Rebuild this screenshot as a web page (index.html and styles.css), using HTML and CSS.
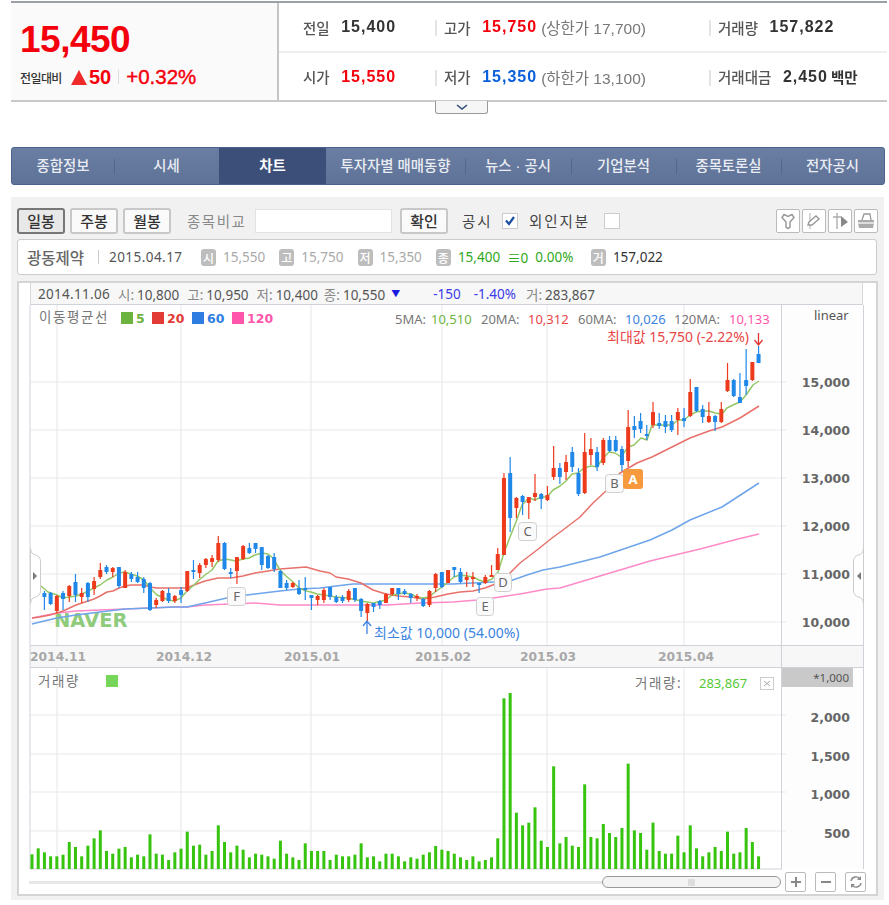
FILE: index.html
```html
<!DOCTYPE html>
<html lang="ko">
<head>
    <meta charset="UTF-8">
    <meta name="viewport" content="width=device-width, initial-scale=1.0">
    <title>광동제약 - 차트</title>
    <link rel="stylesheet" href="styles.css">
</head>
<body>
    <div class="page">
        <div class="quote">
            <div class="quote-now">
                <div class="now-price">15,450</div>
                <div class="now-change">
                    <span class="now-label">전일대비</span>
                    <span class="up-arrow"></span>
                    <span class="now-diff">50</span>
                    <span class="now-sep"></span>
                    <span class="now-rate">+0.32%</span>
                </div>
            </div>
            <div class="quote-table">
                <div class="cell first">
                    <span class="cell-label">전일</span><b class="cell-val">15,400</b>
                </div>
                <div class="cell second">
                    <span class="cell-label">고가</span><b class="cell-val red">15,750</b>
                    <span class="cell-limit">(상한가 17,700)</span>
                </div>
                <div class="cell third">
                    <span class="cell-label">거래량</span><b class="cell-val">157,822</b>
                </div>
                <div class="cell first">
                    <span class="cell-label">시가</span><b class="cell-val red">15,550</b>
                </div>
                <div class="cell second">
                    <span class="cell-label">저가</span><b class="cell-val blue">15,350</b>
                    <span class="cell-limit">(하한가 13,100)</span>
                </div>
                <div class="cell third">
                    <span class="cell-label">거래대금</span><b class="cell-val">2,450</b><span class="cell-unit">백만</span>
                </div>
            </div>
        </div>

        <div class="quote-toggle">
            <svg width="12" height="6" viewBox="0 0 12 6"><path d="M1 1l5 4 5-4" fill="none" stroke="#34507f" stroke-width="1.6"/></svg>
        </div>

        <div class="nav">
            <a class="tab tab-a">종합정보</a>
            <a class="tab tab-b">시세</a>
            <a class="tab tab-c active">차트</a>
            <a class="tab tab-d">투자자별 매매동향</a>
            <a class="tab tab-e">뉴스 · 공시</a>
            <a class="tab tab-f">기업분석</a>
            <a class="tab tab-g">종목토론실</a>
            <a class="tab tab-h">전자공시</a>
        </div>

        <div class="panel">
            <div class="toolbar">
                <button class="btn on">일봉</button>
                <button class="btn">주봉</button>
                <button class="btn">월봉</button>
                <span class="compare">종목비교</span>
                <span class="compare-input"></span>
                <button class="btn confirm">확인</button>
                <span class="tool-text notice">공시</span>
                <span class="check">
                    <svg width="12" height="11" viewBox="0 0 12 11"><path d="M2 5.5l3 3.5 5-7" fill="none" stroke="#1a4fa0" stroke-width="2.2"/></svg>
                </span>
                <span class="tool-text foreign">외인지분</span>
                <span class="check"></span>
                <div class="tool-icons">
                    <span class="icon-btn">
                        <svg width="18" height="18" viewBox="0 0 18 18"><path d="M5 2.500l4 2 4-2 2 3-4 4.500v5l-2 1.500-2-1.500v-5L3 5.500z" fill="#fff" stroke="#999" stroke-width="1.5"/></svg>
                    </span>
                    <span class="icon-btn">
                        <svg width="18" height="18" viewBox="0 0 18 18"><path d="M5 1v16" stroke="#bbb" stroke-width="1.2"/><path d="M3 13l1-3 7-6 3 3-7 6z" fill="#fff" stroke="#999" stroke-width="1.4"/></svg>
                    </span>
                    <span class="icon-btn">
                        <svg width="18" height="18" viewBox="0 0 18 18"><path d="M6 1v16M2 5h8" stroke="#aaa" stroke-width="1.3"/><path d="M10 4l7 6-7 5z" fill="#888"/></svg>
                    </span>
                    <span class="icon-btn">
                        <svg width="20" height="18" viewBox="0 0 20 18"><path d="M6 8l2-6h6l1 6" fill="#fff" stroke="#999" stroke-width="1.3"/><path d="M2 8h16v3l-1 5H3l-1-5z" fill="#aaa"/><path d="M2 11h16" stroke="#fff" stroke-width="1.2"/></svg>
                    </span>
                </div>
            </div>

            <div class="infobar">
                <strong class="info-name">광동제약</strong>
                <span class="info-sep"></span>
                <span class="info-date">2015.04.17</span>
                <span class="info-item"><i class="badge">시</i>15,550</span>
                <span class="info-item"><i class="badge">고</i>15,750</span>
                <span class="info-item"><i class="badge">저</i>15,350</span>
                <span class="info-item close"><i class="badge">종</i>15,400<em class="info-gap">≡0</em><em class="info-gap">0.00%</em></span>
                <span class="info-item vol"><i class="badge">거</i>157,022</span>
            </div>

            <div class="chart-box">
                <div class="chart-head">
                    <span class="head-date">2014.11.06</span>
                    <span><i>시:</i>10,800</span>
                    <span><i>고:</i>10,950</span>
                    <span><i>저:</i>10,400</span>
                    <span class="head-close"><i>종:</i>10,550</span>
                    <span class="head-down">▼</span>
                    <span class="head-change">-150</span>
                    <span class="head-rate">-1.40%</span>
                    <span class="head-vol"><i>거:</i>283,867</span>
                </div>

                <svg class="chart-svg" id="chart" width="859" height="565" viewBox="18 305 859 565">
                    <rect x="782" y="305" width="81" height="564" fill="#fdfdfd"/>
                    <rect x="30" y="645" width="833" height="22" fill="#f7f7f7"/>
                    <g id="grid" stroke="#e9e9e9" stroke-width="1.2"></g>
                    <path d="M30 305V869H782M30 645.5H863M30 667.5H863M781.5 305V869M863.5 305V869" fill="none" stroke="#cfd2d8"/>

                    <text class="naver" x="54" y="627">NAVER</text>
                    <g id="lines" fill="none" stroke-width="1.5" stroke-linejoin="round"></g>
                    <g id="candles"></g>
                    <g id="volumes" fill="#37c40f"></g>

                    <text class="t-gray" x="39" y="322">이동평균선</text>
                    <rect x="121" y="312" width="12" height="12" fill="#6db33f"/>
                    <text class="t-legend" x="136" y="323" fill="#6db33f">5</text>
                    <rect x="152" y="312" width="12" height="12" fill="#e23a34"/>
                    <text class="t-legend" x="167" y="323" fill="#e23a34">20</text>
                    <rect x="192" y="312" width="12" height="12" fill="#2f7de1"/>
                    <text class="t-legend" x="207" y="323" fill="#2f7de1">60</text>
                    <rect x="232" y="312" width="12" height="12" fill="#ff55aa"/>
                    <text class="t-legend" x="247" y="323" fill="#ff55aa">120</text>

                    <text class="t-ma" x="395" y="324" fill="#777">5MA:</text>
                    <text class="t-ma" x="431" y="324" fill="#6db33f">10,510</text>
                    <text class="t-ma" x="481" y="324" fill="#777">20MA:</text>
                    <text class="t-ma" x="528" y="324" fill="#e84545">10,312</text>
                    <text class="t-ma" x="578" y="324" fill="#777">60MA:</text>
                    <text class="t-ma" x="625" y="324" fill="#3d84e0">10,026</text>
                    <text class="t-ma" x="674" y="324" fill="#777">120MA:</text>
                    <text class="t-ma" x="729" y="324" fill="#ff55aa">10,133</text>
                    <text class="t-note" x="607" y="342" fill="#e84545">최대값 15,750 (-2.22%)</text>
                    <path d="M758.5 333v11M754.5 340l4 5 4-5" fill="none" stroke="#e03030" stroke-width="1.3"/>
                    <text class="t-ma" x="814" y="320" fill="#555">linear</text>

                    <path d="M367 634v-13M363 626l4-5 4 5" fill="none" stroke="#3d84e0" stroke-width="1.3"/>
                    <text class="t-note" x="374" y="638" fill="#3d84e0">최소값 10,000 (54.00%)</text>

                    <g class="mark">
                        <rect x="605.5" y="474.5" width="18" height="18" rx="3"/><text x="614.5" y="488">B</text>
                        <rect x="518.5" y="522.5" width="18" height="18" rx="3"/><text x="527.5" y="536">C</text>
                        <rect x="494.5" y="573.5" width="17" height="18" rx="3"/><text x="503" y="587">D</text>
                        <rect x="476.5" y="597.5" width="17" height="18" rx="3"/><text x="485" y="611">E</text>
                        <rect x="227.5" y="587.5" width="18" height="18" rx="3"/><text x="236.5" y="601">F</text>
                    </g>
                    <rect x="623" y="469" width="20" height="20" rx="3" fill="#f79a3e"/>
                    <text class="mark-a" x="633" y="484">A</text>

                    <g class="t-axis">
                        <text x="850" y="387">15,000</text>
                        <text x="850" y="435">14,000</text>
                        <text x="850" y="483">13,000</text>
                        <text x="850" y="531">12,000</text>
                        <text x="850" y="579">11,000</text>
                        <text x="850" y="627">10,000</text>
                        <text x="850" y="722">2,000</text>
                        <text x="850" y="761">1,500</text>
                        <text x="850" y="799">1,000</text>
                        <text x="850" y="838">500</text>
                    </g>
                    <g class="t-date">
                        <text x="30" y="661">2014.11</text>
                        <text x="156" y="661">2014.12</text>
                        <text x="284" y="661">2015.01</text>
                        <text x="415" y="661">2015.02</text>
                        <text x="520" y="661">2015.03</text>
                        <text x="658" y="661">2015.04</text>
                    </g>

                    <path d="M30.5 548q0 6 5 7 5 1 5 7v28q0 6-5 7-5 1-5 7z" fill="#fff" stroke="#ccc"/>
                    <path d="M33 572l4 4-4 4z" fill="#777"/>
                    <path d="M863.5 548q0 6-5 7-5 1-5 7v28q0 6 5 7 5 1 5 7z" fill="#fff" stroke="#ccc"/>
                    <path d="M861 572l-4 4 4 4z" fill="#777"/>

                    <text class="t-gray" x="38" y="686">거래량</text>
                    <rect x="106" y="675" width="12" height="12" fill="#76d65a"/>
                    <text class="t-gray" x="635" y="688">거래량:</text>
                    <text class="t-ma" x="699" y="688" fill="#55c934">283,867</text>
                    <rect x="760.5" y="677.5" width="13" height="12" fill="#fff" stroke="#ccc"/>
                    <path d="M764 681l6 5M770 681l-6 5" stroke="#aaa"/>
                    <rect x="782" y="668" width="71" height="19" fill="#c9c9c9"/>
                    <text class="t-unit" x="849" y="682">*1,000</text>
                </svg>

                <div class="chart-foot">
                    <div class="scroll-track">
                        <span class="scroll-thumb"><span class="scroll-grip"></span></span>
                    </div>
                    <span class="zoom-btn">
                        <svg width="12" height="12" viewBox="0 0 12 12"><path d="M6 1v10M1 6h10" stroke="#888" stroke-width="2"/></svg>
                    </span>
                    <span class="zoom-btn">
                        <svg width="12" height="12" viewBox="0 0 12 12"><path d="M1 6h10" stroke="#888" stroke-width="2"/></svg>
                    </span>
                    <span class="zoom-btn">
                        <svg width="14" height="14" viewBox="0 0 14 14"><path d="M2 6a5 5 0 0 1 9-2M12 8a5 5 0 0 1-9 2" fill="none" stroke="#888" stroke-width="1.4"/><path d="M12 1v4H8zM2 13V9h4z" fill="#888"/></svg>
                    </span>
                </div>
            </div>
        </div>
    </div>

    <script src="chart.js"></script>
</body>
</html>
```

FILE: styles.css
```css
* {
    margin: 0;
    padding: 0;
    box-sizing: border-box;
}

body {
    font-family: 'Liberation Sans', 'Noto Sans CJK KR', sans-serif;
    background: #fff;
    color: #333;
    overflow: hidden;
}

.page {
    width: 889px;
    height: 905px;
    padding: 1px 2px 0 11px;
    filter: blur(0.55px);
}

/* quote summary */
.quote {
    display: flex;
    height: 101px;
    border-top: 2px solid #9a9fa8;
    border-bottom: 2px solid #c9c9c9;
}

.quote-now {
    width: 268px;
    background: #fafafa;
    border-right: 2px solid #c4c4c4;
    padding: 18px 0 0 9px;
}

.now-price {
    font-size: 37px;
    font-weight: bold;
    line-height: 38px;
    letter-spacing: -0.5px;
    color: #f4000c;
}

.now-change {
    display: flex;
    align-items: center;
    height: 26px;
    margin-top: 5px;
}

.now-label {
    font-size: 12px;
    font-weight: 500;
    letter-spacing: -0.6px;
    color: #333;
    width: 51px;
}

.up-arrow {
    width: 0;
    height: 0;
    border-left: 8px solid transparent;
    border-right: 8px solid transparent;
    border-bottom: 15px solid #ee2a2a;
}

.now-diff {
    margin-left: 2px;
    font-size: 20px;
    font-weight: bold;
    color: #f4000c;
}

.now-sep {
    width: 1px;
    height: 14px;
    margin: 0 7px;
    background: #ddd;
}

.now-rate {
    font-size: 20.5px;
    color: #f4000c;
    -webkit-text-stroke: 0.4px #f4000c;
}

.quote-table {
    flex: 1;
    display: grid;
    grid-template-columns: 156px 274px 1fr;
    grid-template-rows: 50px 1fr;
}

.cell {
    display: flex;
    align-items: center;
    position: relative;
}

.cell:nth-child(-n+3) {
    border-bottom: 2px solid #efefef;
}

.first {
    padding-left: 24px;
}

.second {
    padding-left: 9px;
}

.third {
    padding-left: 9px;
}

.second::before,
.third::before {
    content: '';
    position: absolute;
    left: 0;
    top: 17px;
    width: 2px;
    height: 16px;
    background: #e4e4e4;
}

.cell-label {
    font-size: 14.5px;
    font-weight: 500;
    color: #555;
    margin-right: 11.5px;
}

.cell-val {
    font-size: 16px;
    letter-spacing: 1px;
    color: #333;
}

.red {
    color: #f4000c;
}

.blue {
    color: #0a5fdc;
}

.cell-limit {
    margin-left: 4px;
    font-size: 15.5px;
    color: #777;
}

.cell-unit {
    margin-left: 3px;
    font-size: 14.5px;
    font-weight: 700;
    color: #333;
}

.quote-toggle {
    width: 53px;
    height: 13px;
    margin-left: 424px;
    margin-top: -1px;
    display: flex;
    justify-content: center;
    align-items: center;
    border: 1px solid #999;
    border-top: none;
    border-radius: 0 0 3px 3px;
    background: #f6f6f6;
}

/* tabs */
.nav {
    display: flex;
    width: 874px;
    height: 38px;
    margin-top: 33px;
    background: #63769c;
    border: 1px solid #4d628c;
    border-radius: 3px;
}

.tab {
    display: flex;
    align-items: center;
    justify-content: center;
    position: relative;
    padding-bottom: 4px;
    font-size: 14.4px;
    font-weight: 500;
    color: #e9edf3;
    background: linear-gradient(#6a7da2, #5f7298);
}

.tab.active {
    background: #3b4f78;
    color: #fff;
    font-weight: 700;
}

.tab-a { width: 102px; border-radius: 3px 0 0 3px; }
.tab-b { width: 105px; }
.tab-c { width: 107px; }
.tab-d { width: 139px; }
.tab-e { width: 106px; }
.tab-f { width: 105px; }
.tab-g { width: 105px; }
.tab-h { flex: 1; border-radius: 0 3px 3px 0; }

.tab-b::before,
.tab-e::before,
.tab-f::before,
.tab-g::before,
.tab-h::before {
    content: '';
    position: absolute;
    left: 0;
    top: 11px;
    width: 1px;
    height: 15px;
    background: #54668c;
}

/* chart panel */
.panel {
    width: 873px;
    height: 703px;
    margin-top: 12px;
    padding: 10px 6px 0 6px;
    background: #f1f1f1;
}

.toolbar {
    display: flex;
    align-items: center;
    height: 27px;
}

.btn {
    width: 48px;
    height: 26px;
    margin-right: 5px;
    font: 500 15px 'Noto Sans CJK KR', sans-serif;
    color: #333;
    background: #fafafa;
    border: 2px solid #c8c8c8;
    border-radius: 3px;
}

.btn.on {
    background: #e8e8e8;
    border-color: #777;
}

.compare {
    margin-left: 11px;
    width: 68px;
    font-size: 14.5px;
    letter-spacing: 1.5px;
    color: #888;
}

.compare-input {
    width: 137px;
    height: 24px;
    background: #fff;
    border: 1px solid #e2e2e2;
}

.confirm {
    margin: 0 0 0 8px;
}

.tool-text {
    font-size: 14.5px;
    letter-spacing: 1.9px;
    color: #444;
}

.notice {
    margin-left: 14px;
    width: 40px;
}

.check {
    display: flex;
    align-items: center;
    justify-content: center;
    width: 16px;
    height: 16px;
    background: #fff;
    border: 1px solid #ccc;
}

.foreign {
    margin-left: 11px;
    width: 75px;
}

.tool-icons {
    display: flex;
    gap: 2px;
    margin-left: auto;
}

.icon-btn {
    display: flex;
    align-items: center;
    justify-content: center;
    width: 24px;
    height: 24px;
    background: #fff;
    border: 1px solid #bbb;
    border-radius: 2px;
}

.infobar {
    display: flex;
    align-items: center;
    width: 860px;
    height: 36px;
    margin-top: 5px;
    padding-left: 9px;
    background: #fff;
    border: 1px solid #ccc;
    border-radius: 3px;
    font-family: 'Noto Sans', 'Noto Sans CJK KR', sans-serif;
    font-size: 13.5px;
}

.info-name {
    width: 60px;
    font-family: 'Noto Sans CJK KR', sans-serif;
    font-size: 15.5px;
    font-weight: 500;
    white-space: nowrap;
    color: #666;
}

.info-sep {
    width: 1px;
    height: 14px;
    margin: 0 10px 0 11px;
    background: #ccc;
}

.info-date {
    width: 92px;
    color: #555;
    letter-spacing: 0.45px;
}

.info-item {
    display: flex;
    align-items: center;
    flex: none;
    width: 78.3px;
    color: #aaa;
}

.badge {
    display: flex;
    align-items: center;
    justify-content: center;
    width: 15px;
    height: 17px;
    margin-right: 7px;
    border-radius: 3px;
    background: #bdbdbd;
    font: 500 12px 'Noto Sans CJK KR', sans-serif;
    color: #fff;
}

.info-item.close {
    width: 155px;
    color: #2fa820;
}

.info-gap {
    font-style: normal;
    margin-left: 7px;
}

.info-item.vol {
    width: 80px;
    color: #333;
}

.chart-box {
    width: 861px;
    height: 615px;
    margin-top: 6px;
    background: #fff;
    border: 2px solid #d4d4d4;
}

.chart-head {
    display: flex;
    align-items: center;
    gap: 8px;
    height: 22px;
    margin-left: 11px;
    margin-right: 13px;
    padding-left: 7px;
    background: #f7f7f7;
    border-left: 1px solid #d9d9d9;
    border-right: 1px solid #d9d9d9;
    border-bottom: 1px solid #cfd2d8;
    font-family: 'Noto Sans', 'Noto Sans CJK KR', sans-serif;
    font-size: 13.5px;
    color: #555;
}

.chart-head i {
    font-style: normal;
    color: #888;
    margin-right: 3px;
}

.head-date {
    letter-spacing: 0.3px;
}

.head-close {
    margin-left: -2px;
}

.head-down {
    margin-left: -2px;
    font-size: 9px;
    color: #1a1ae0;
}

.head-change {
    margin-left: 25px;
    color: #3a3ae8;
}

.head-rate {
    margin-left: 5px;
    color: #3a3ae8;
}

.head-vol {
    margin-left: 2px;
}

.chart-svg {
    display: block;
    margin-left: -1px;
}

.chart-svg text {
    font-family: 'Noto Sans', 'Noto Sans CJK KR', sans-serif;
}

.chart-svg .t-gray {
    font-size: 13.5px;
    letter-spacing: 1.6px;
    fill: #777;
}

.chart-svg .t-legend {
    font-family: 'DejaVu Sans', sans-serif;
    font-size: 12.5px;
    font-weight: bold;
}

.chart-svg .t-ma {
    font-size: 13px;
}

.chart-svg .t-note {
    font-size: 14px;
}

.chart-svg .naver {
    font-family: 'DejaVu Sans', sans-serif;
    font-size: 19.5px;
    font-weight: bold;
    fill: #8fcb7c;
}

.chart-svg .t-axis text {
    font-family: 'DejaVu Sans', sans-serif;
    font-size: 12.5px;
    font-weight: bold;
    text-anchor: end;
    fill: #666;
}

.chart-svg .t-date text {
    font-family: 'DejaVu Sans', sans-serif;
    font-size: 12.3px;
    font-weight: bold;
    fill: #a8a8a8;
}

.mark rect {
    fill: #fafafa;
    stroke: #cfcfcf;
}

.chart-svg .mark text,
.chart-svg .mark-a {
    font-size: 13px;
    text-anchor: middle;
    fill: #666;
}

.chart-svg .mark-a {
    font-weight: bold;
    fill: #fff;
}

.chart-svg .t-unit {
    font-size: 11.5px;
    text-anchor: end;
    fill: #555;
}

.chart-foot {
    display: flex;
    align-items: center;
    height: 24px;
    padding-left: 10px;
}

.scroll-track {
    display: flex;
    flex: none;
    align-items: center;
    justify-content: flex-end;
    width: 752px;
    height: 3px;
    margin-right: 4px;
    background: #e7e7e7;
}

.scroll-thumb {
    display: flex;
    flex: none;
    align-items: center;
    justify-content: center;
    width: 179px;
    height: 12px;
    background: #f4f4f4;
    border: 1px solid #999;
    border-radius: 6px;
}

.scroll-grip {
    width: 7px;
    height: 7px;
    background: #ddd;
}

.zoom-btn {
    display: flex;
    flex: none;
    align-items: center;
    justify-content: center;
    width: 21px;
    height: 20px;
    margin-right: 9px;
    background: #fff;
    border: 1px solid #bbb;
    border-radius: 2px;
}
```

FILE: chart.js
```js
// x of the n-th trading day, same for candles and volume bars
function dayX(i) {
    return 32 + 6.21 * i;
}

// candles from 2014.11 on: [high, low, bodyTop, bodyBottom, colour], plotted in screen y
const candles = [
    null, null,
    [591,610,593,597,'b'],[592,605,593,604,'b'],[595,613,596,611,'r'],[591,610,593,599,'b'],[585,602,586,596,'r'],
    [574,602,582,595,'b'],[588,603,593,597,'r'],[582,602,583,597,'b'],[577,595,581,589,'r'],[563,579,570,577,'r'],
    [565,574,567,572,'b'],[567,577,568,572,'r'],[567,588,567,586,'b'],[570,588,572,588,'r'],[572,582,574,579,'b'],
    [572,583,577,582,'b'],[577,593,579,588,'b'],[582,611,583,610,'b'],[598,608,600,605,'r'],[590,602,591,601,'r'],
    [588,603,593,601,'b'],[595,603,596,601,'r'],[587,603,590,595,'b'],[571,592,571,591,'r'],[560,579,570,572,'b'],
    [563,578,565,573,'r'],[558,568,559,565,'r'],[555,567,558,562,'r'],[536,562,543,560,'r'],[542,570,543,569,'b'],
    [568,578,572,573,'b'],[557,584,557,571,'r'],[545,560,546,559,'r'],[543,554,548,553,'b'],[543,553,543,549,'b'],
    [547,570,547,565,'b'],[555,569,556,568,'b'],[553,572,557,569,'b'],[570,588,571,588,'b'],[580,590,583,588,'b'],
    [582,588,583,587,'r'],[580,595,588,594,'b'],[577,600,588,590,'b'],[595,610,595,598,'b'],[595,605,596,600,'r'],
    [588,603,590,600,'r'],[587,600,587,597,'b'],[595,603,597,602,'b'],[595,603,597,601,'b'],[589,602,591,600,'r'],
    [588,602,588,600,'b'],[598,617,599,611,'b'],[603,622,604,613,'r'],[603,612,603,607,'b'],[600,609,601,605,'b'],
    [593,603,594,603,'r'],[588,596,588,594,'r'],[588,600,588,594,'b'],[589,595,591,594,'b'],[593,603,594,598,'b'],
    [594,601,596,598,'r'],[598,607,599,606,'b'],[590,607,591,605,'r'],[573,592,574,588,'r'],[572,588,572,587,'b'],
    [570,583,570,583,'r'],[567,577,567,570,'b'],[568,583,572,582,'b'],[572,587,577,580,'r'],[572,587,577,579,'r'],
    [583,593,583,585,'b'],[575,584,577,583,'r'],[565,577,575,576,'r'],[548,570,554,570,'r'],[473,555,478,555,'r'],
    [457,532,473,518,'b'],[497,518,498,508,'r'],[495,515,496,502,'b'],[497,519,497,503,'r'],[474,501,493,497,'r'],
    [493,509,494,499,'b'],[486,501,495,500,'r'],[446,480,468,477,'r'],[463,484,468,477,'b'],[455,480,462,472,'r'],
    [447,472,452,467,'b'],[468,496,473,494,'b'],[433,494,452,493,'r'],[438,465,449,455,'r'],[447,471,452,467,'b'],
    [438,465,440,463,'r'],[436,452,440,451,'b'],[436,452,440,451,'b'],[446,471,449,465,'b'],[410,467,427,461,'r'],
    [416,438,426,430,'b'],[413,433,421,429,'b'],[425,440,434,435,'b'],[402,428,412,425,'r'],[413,429,423,426,'b'],
    [415,433,421,427,'b'],[415,432,421,430,'b'],[408,435,412,420,'r'],[408,427,418,421,'b'],[379,417,392,416,'r'],
    [387,412,387,411,'b'],[405,423,409,417,'b'],[402,423,416,422,'r'],[415,431,416,422,'b'],[402,423,409,422,'r'],
    [363,392,380,391,'r'],[379,397,380,396,'b'],[373,403,397,403,'b'],[349,395,380,386,'b'],[362,381,362,380,'r'],
    [346,363,354,363,'b']
];

// bar heights in thirds of a pixel
const volumes = [
    44,62,50,38,38,43,81,66,38,70,92,116,54,46,61,66,35,43,38,104,46,43,27,50,61,112,70,73,43,54,131,81,50,70,58,35,
    46,43,38,31,85,46,35,27,77,54,54,54,27,43,38,38,43,77,35,38,23,46,46,38,23,35,31,43,50,69,58,54,
    46,35,27,38,23,27,35,92,512,528,169,131,139,185,85,66,308,77,96,70,66,254,96,92,135,108,96,123,316,116,108,58,
    139,54,46,46,100,50,131,62,38,50,66,54,112,46,50,123,81,38
];

// moving averages as [x, y] screen points
function pts(list) {
    return list.map((p) => p.join(',')).join(' ');
}

const ma120 = [[32,618],[57,613],[76,611],[100,610],[125,609],[150,608],[174,607],[187,607],[205,605],[231,604],[255,603],[280,605],
    [320,605],[387,605],[420,603],[453,602],[477,600],[493,598],[520,594],[547,589],[560,588],[600,576],[650,561],[700,549],[738,539],[759,534]];
const ma60 = [[32,624],[40,622],[57,618],[76,615],[100,612],[125,609],[150,608],[174,607],[187,607],[205,603],[218,600],[231,597],[255,594],
    [280,591],[299,589],[320,588],[336,586],[353,584],[387,584],[453,584],[493,582],[510,581],[527,575],[543,570],[560,567],
    [600,557],[650,540],[672,530],[690,520],[722,507],[759,483]];
const ma20 = [[32,618],[40,617],[50,615],[57,613],[63,611],[76,605],[82,603],[94,599],[100,596],[107,592],[113,591],[119,588],[125,586],
    [131,585],[144,585],[150,587],[157,588],[168,588],[187,588],[194,585],[205,581],[218,578],[231,578],[243,576],[255,573],
    [268,571],[280,569],[293,568],[306,567],[320,571],[330,573],[336,577],[348,579],[361,583],[373,590],[386,594],[398,596],[411,597],
    [423,599],[435,597],[448,594],[460,592],[473,591],[485,588],[498,583],[510,573],[520,563],[537,550],[552,538],[563,530],[580,517],
    [593,503],[607,490],[620,473],[637,463],[652,457],[672,447],[690,438],[709,431],[722,427],[740,418],[759,406]];
const ma5 = [[41,586],[48,592],[57,595],[63,598],[69,597],[76,596],[82,594],[94,588],[100,585],[107,580],[113,577],[119,573],[125,572],
    [131,574],[137,576],[144,580],[150,588],[157,595],[162,597],[168,600],[174,601],[181,598],[187,591],[194,585],[199,580],[205,575],
    [212,570],[218,561],[225,559],[231,560],[236,561],[243,559],[249,558],[255,555],[262,553],[268,554],[273,558],[280,570],[286,576],
    [293,582],[299,588],[306,591],[311,592],[317,594],[324,595],[336,597],[348,598],[361,601],[373,603],[386,600],[392,595],[404,593],
    [411,594],[417,597],[423,598],[429,597],[435,592],[442,587],[448,582],[454,577],[460,575],[467,576],[473,577],[479,580],[485,582],
    [492,579],[498,572],[504,553],[510,537],[516,522],[522,505],[529,498],[535,500],[541,497],[547,497],[553,490],[560,486],[566,481],
    [572,474],[578,473],[584,468],[591,466],[597,467],[603,458],[609,452],[615,453],[621,457],[628,447],[634,445],[641,438],[647,440],
    [652,425],[659,425],[665,425],[672,425],[678,420],[684,420],[690,415],[696,412],[702,411],[709,411],[715,413],[722,414],[727,408],
    [733,405],[740,402],[746,395],[753,385],[759,381]];

const lineSets = [[ma120, '#ff8ac6'], [ma60, '#6fa5ea'], [ma20, '#e8716b'], [ma5, '#94c766']];
document.getElementById('lines').innerHTML = lineSets
    .map(([line, colour]) => `<polyline points="${pts(line)}" stroke="${colour}"/>`)
    .join('');

// grid
const priceRows = [382, 430, 478, 526, 574, 622];
const volRows = [715, 754, 792, 831];
const months = [57, 181, 311, 442, 547, 684];
let grid = '';
priceRows.forEach((y) => { grid += `<path d="M30 ${y}H786"/>`; });
volRows.forEach((y) => { grid += `<path d="M30 ${y}H786"/>`; });
months.forEach((x) => { grid += `<path d="M${x} 305V645M${x} 668V869"/>`; });
document.getElementById('grid').innerHTML = grid;

const candleColours = { r: '#ee3a1c', b: '#1f88e8' };
document.getElementById('candles').innerHTML = candles.map((c, i) => {
    if (!c) return '';
    const x = dayX(i);
    const colour = candleColours[c[4]];
    const h = Math.max(c[3] - c[2], 2);
    return `<path d="M${x} ${c[0]}V${c[1]}" stroke="${colour}" stroke-width="1.2"/>` +
        `<rect x="${x - 2}" y="${c[2]}" width="4" height="${h}" rx="0.5" fill="${colour}"/>`;
}).join('');

document.getElementById('volumes').innerHTML = volumes.map((h, i) => {
    const px = h / 3;
    return `<rect x="${dayX(i) - 1.5}" y="${869 - px}" width="3" height="${px}"/>`;
}).join('');
```
